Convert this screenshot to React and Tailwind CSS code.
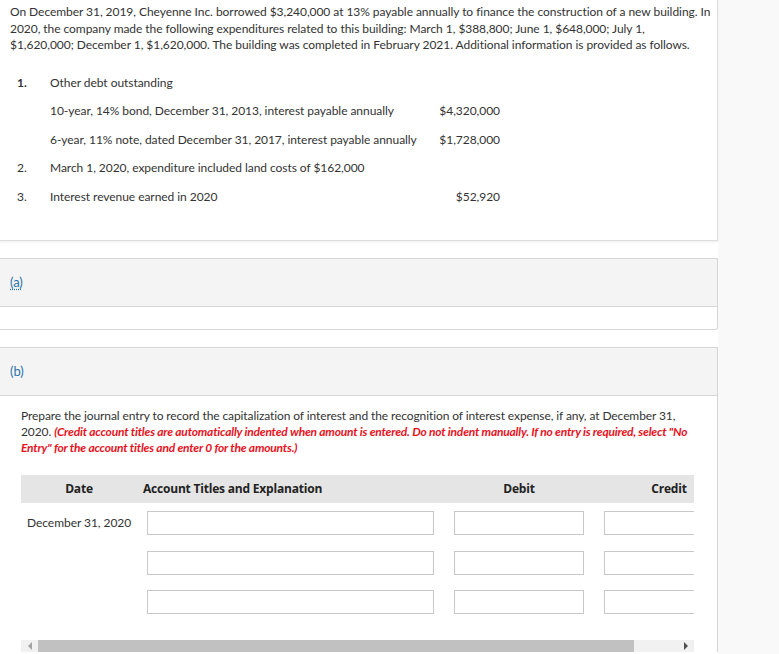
const font = { fontFamily: 'Lato, "Open Sans", sans-serif' }
const headFont = { fontFamily: '"Open Sans", Lato, sans-serif' }

function InfoRow({ num, bold, text, amount }) {
  return (
    <div className="flex h-[28.5px] items-center">
      <div className={`w-[33px] ${bold ? 'font-bold' : ''}`}>{num}</div>
      <div className="w-[389px]">{text}</div>
      <div className="w-[61px] text-right">{amount}</div>
    </div>
  )
}

function EntryRow({ date }) {
  return (
    <div className="flex h-[24px] items-center">
      <div className="w-[116px] pl-[6px] text-[12px] text-[#333]">{date}</div>
      <div className="ml-[10px] h-[24px] w-[287px] flex-none border border-[#c8c8c8] bg-white" />
      <div className="ml-[20px] h-[24px] w-[130px] flex-none border border-[#c8c8c8] bg-white" />
      <div className="ml-[20px] h-[24px] w-[130px] flex-none border border-[#c8c8c8] bg-white" />
    </div>
  )
}

export default function App() {
  return (
    <div className="flex min-h-screen bg-[#f9f9f9] tracking-[-0.05px] text-[#333]" style={font}>
      <div className="w-[718px] flex-none bg-white">
        {/* problem statement */}
        <div className="h-[241px] border-r border-b border-[#dedede] pt-[4px] pr-[2px] pl-[10px] text-[12px] shadow-[0_1px_2px_rgba(0,0,0,0.08)]">
          <p className="leading-[16.5px] whitespace-nowrap">
            On December 31, 2019, Cheyenne Inc. borrowed $3,240,000 at 13% payable annually to finance the construction of a new building. In
            <br />
            2020, the company made the following expenditures related to this building: March 1, $388,800; June 1, $648,000; July 1,
            <br />
            $1,620,000; December 1, $1,620,000. The building was completed in February 2021. Additional information is provided as follows.
          </p>
          <div className="mt-[15px] pl-[7px]">
            <InfoRow num="1." bold text="Other debt outstanding" />
            <InfoRow text="10-year, 14% bond, December 31, 2013, interest payable annually" amount="$4,320,000" />
            <InfoRow text="6-year, 11% note, dated December 31, 2017, interest payable annually" amount="$1,728,000" />
            <InfoRow num="2." text="March 1, 2020, expenditure included land costs of $162,000" />
            <InfoRow num="3." text="Interest revenue earned in 2020" amount="$52,920" />
          </div>
        </div>

        {/* part (a) */}
        <div className="mt-[17px] rounded-br-[3px] border-y border-r border-[#d6d6d6]">
          <div className="flex h-[48px] items-center border-b border-[#d6d6d6] bg-[#f4f4f4] px-[10px]">
            <span className="text-[13px] text-[#2a73ad] underline decoration-dotted underline-offset-2">(a)</span>
          </div>
          <div className="h-[22px]" />
        </div>

        {/* part (b) */}
        <div className="mt-[17px] border-t border-r border-[#d6d6d6]">
          <div className="flex h-[48px] items-center border-b border-[#d6d6d6] bg-[#f4f4f4] px-[10px]">
            <span className="text-[13px] text-[#2a73ad]">(b)</span>
          </div>
          <div className="px-[21px] pt-[12px]">
            <p className="text-[12px] leading-[16px] tracking-[-0.1px]">
              Prepare the journal entry to record the capitalization of interest and the recognition of interest expense, if any, at December 31, 2020.{' '}
              <span className="font-bold italic tracking-[-0.2px] text-[#e8121c]">
                (Credit account titles are automatically indented when amount is entered. Do not indent manually. If no entry is required, select "No Entry" for the account titles and enter 0 for the amounts.)
              </span>
            </p>

            <div className="mt-[19px] w-[673px] overflow-hidden">
              <div className="w-[760px]">
                <div
                  className="flex h-[28px] w-[673px] items-center bg-[#e5e5e5] text-[12px] font-bold tracking-[-0.2px] text-[#222]"
                  style={headFont}
                >
                  <div className="w-[116px] flex-none text-center">Date</div>
                  <div className="w-[297px] flex-none pl-[6px]">Account Titles and Explanation</div>
                  <div className="ml-[20px] w-[130px] flex-none text-center">Debit</div>
                  <div className="ml-[20px] w-[130px] flex-none text-center">Credit</div>
                </div>
                <div className="mt-[8px] flex flex-col gap-[15.5px]">
                  <EntryRow date="December 31, 2020" />
                  <EntryRow />
                  <EntryRow />
                </div>
              </div>
            </div>

            {/* horizontal scrollbar */}
            <div className="mt-[26px] flex h-[12px] w-[673px] items-center bg-[#f1f1f1]">
              <div className="flex w-[17px] justify-center">
                <div className="h-0 w-0 border-y-[4px] border-r-[4px] border-y-transparent border-r-[#a3a3a3]" />
              </div>
              <div className="h-full w-[596px] bg-[#c1c1c1]" />
              <div className="flex flex-1 justify-end pr-[6px]">
                <div className="h-0 w-0 border-y-[4px] border-l-[4px] border-y-transparent border-l-[#505050]" />
              </div>
            </div>
          </div>
        </div>
      </div>
    </div>
  )
}
